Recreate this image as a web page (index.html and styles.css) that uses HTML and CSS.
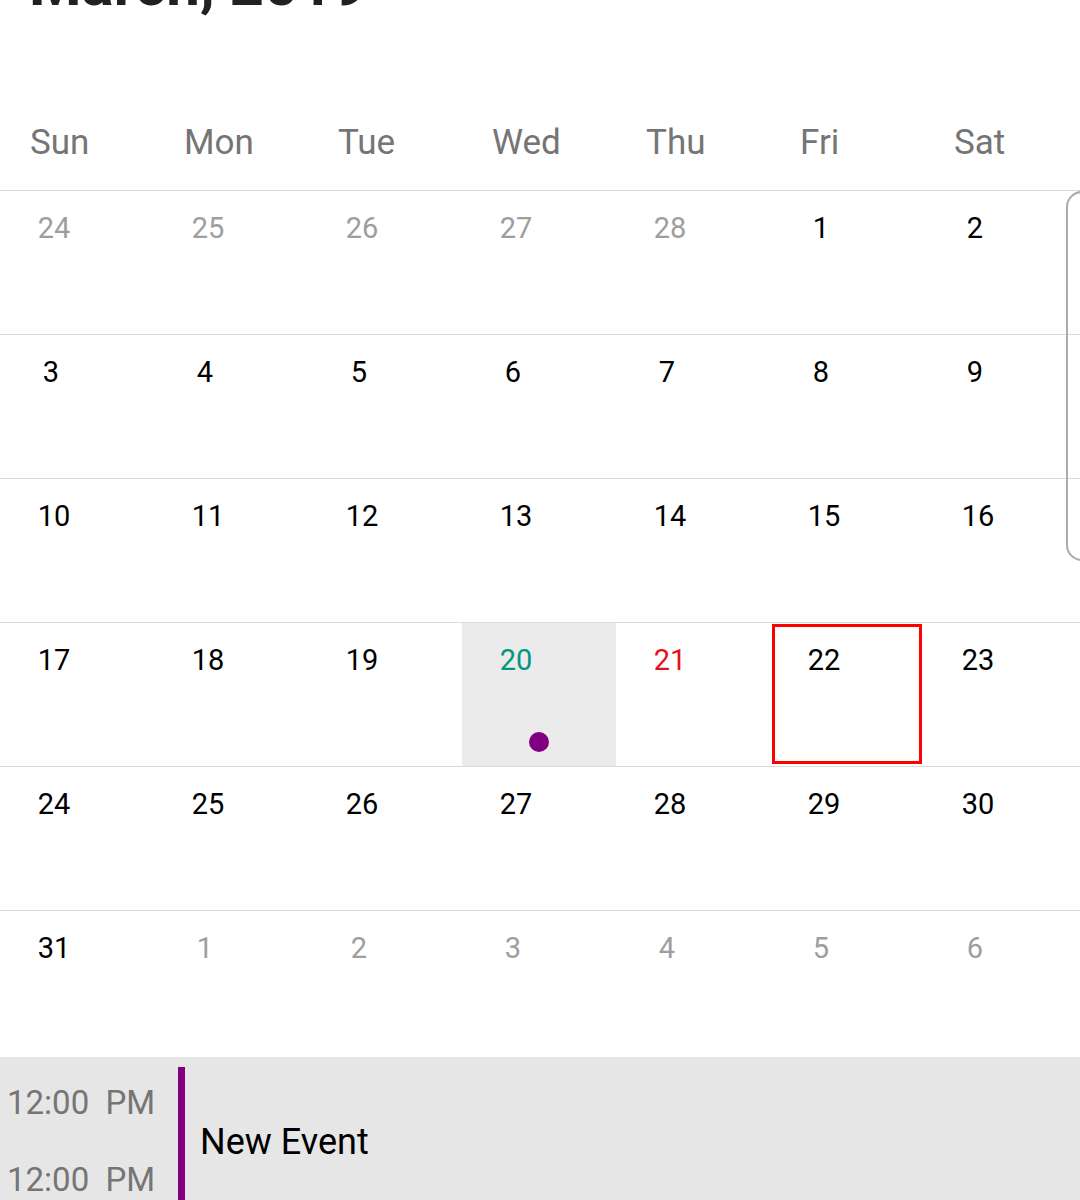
FILE: index.html
```html
<!DOCTYPE html>
<html>
<head>
<meta charset="utf-8">
<link rel="stylesheet" href="styles.css">
</head>
<body>
<div class="page">
  <div class="title">March, 2019</div>
  <div class="weekdays">
    <div class="wd">Sun</div><div class="wd">Mon</div><div class="wd">Tue</div><div class="wd">Wed</div><div class="wd">Thu</div><div class="wd">Fri</div><div class="wd">Sat</div>
  </div>
  <div class="month">
    <div class="week">
      <div class="cell"><span class="num muted">24</span></div>
      <div class="cell"><span class="num muted">25</span></div>
      <div class="cell"><span class="num muted">26</span></div>
      <div class="cell"><span class="num muted">27</span></div>
      <div class="cell"><span class="num muted">28</span></div>
      <div class="cell"><span class="num one">1</span></div>
      <div class="cell"><span class="num one">2</span></div>
    </div>
    <div class="week">
      <div class="cell"><span class="num one">3</span></div>
      <div class="cell"><span class="num one">4</span></div>
      <div class="cell"><span class="num one">5</span></div>
      <div class="cell"><span class="num one">6</span></div>
      <div class="cell"><span class="num one">7</span></div>
      <div class="cell"><span class="num one">8</span></div>
      <div class="cell"><span class="num one">9</span></div>
    </div>
    <div class="week">
      <div class="cell"><span class="num">10</span></div>
      <div class="cell"><span class="num">11</span></div>
      <div class="cell"><span class="num">12</span></div>
      <div class="cell"><span class="num">13</span></div>
      <div class="cell"><span class="num">14</span></div>
      <div class="cell"><span class="num">15</span></div>
      <div class="cell"><span class="num">16</span></div>
    </div>
    <div class="week">
      <div class="cell"><span class="num">17</span></div>
      <div class="cell"><span class="num">18</span></div>
      <div class="cell"><span class="num">19</span></div>
      <div class="cell today"><span class="num teal">20</span><span class="dot"></span></div>
      <div class="cell"><span class="num red">21</span></div>
      <div class="cell selected"><span class="num">22</span></div>
      <div class="cell"><span class="num">23</span></div>
    </div>
    <div class="week">
      <div class="cell"><span class="num">24</span></div>
      <div class="cell"><span class="num">25</span></div>
      <div class="cell"><span class="num">26</span></div>
      <div class="cell"><span class="num">27</span></div>
      <div class="cell"><span class="num">28</span></div>
      <div class="cell"><span class="num">29</span></div>
      <div class="cell"><span class="num">30</span></div>
    </div>
    <div class="week last">
      <div class="cell"><span class="num">31</span></div>
      <div class="cell"><span class="num one muted">1</span></div>
      <div class="cell"><span class="num one muted">2</span></div>
      <div class="cell"><span class="num one muted">3</span></div>
      <div class="cell"><span class="num one muted">4</span></div>
      <div class="cell"><span class="num one muted">5</span></div>
      <div class="cell"><span class="num one muted">6</span></div>
    </div>
    <div class="scroll-indicator"></div>
  </div>
  <div class="events">
    <div class="event">
      <div class="times">
        <div class="time">12:00  PM</div>
        <div class="time">12:00  PM</div>
      </div>
      <div class="bar"></div>
      <div class="event-title">New Event</div>
    </div>
  </div>
</div>
</body>
</html>
```

FILE: styles.css
```css
html, body {
  margin: 0;
  padding: 0;
  background: #ffffff;
  overflow: hidden;
}
body {
  font-family: Roboto, "Noto Sans", "Liberation Sans", sans-serif;
  width: 1080px;
  height: 1200px;
}
.page {
  position: relative;
  width: 1080px;
  height: 1200px;
  overflow: hidden;
}
.title {
  font-size: 60px;
  font-weight: 700;
  line-height: 60px;
  height: 60px;
  margin-top: -45px;
  padding-left: 29px;
  color: #212121;
  white-space: nowrap;
}
.weekdays {
  box-sizing: border-box;
  height: 176px;
  padding-top: 110px;
  display: grid;
  grid-template-columns: repeat(7, 154px);
  border-bottom: 1px solid #dadada;
}
.wd {
  font-size: 35px;
  line-height: 35px;
  color: #757575;
  padding-left: 30px;
}
.month {
  position: relative;
}
.week {
  box-sizing: border-box;
  height: 144px;
  display: grid;
  grid-template-columns: repeat(7, 154px);
  border-bottom: 1px solid #dadada;
}
.week.last {
  border-bottom: none;
  height: 145px;
}
.cell {
  display: flex;
  flex-direction: column;
  align-items: flex-start;
  padding-top: 23px;
  box-sizing: border-box;
}
.num {
  display: block;
  width: 60px;
  margin-left: 24px;
  text-align: center;
  font-size: 29px;
  line-height: 29px;
  color: #000000;
}
.num.one { margin-left: 21px; }
.num.muted { color: #9e9e9e; }
.num.teal { color: #00967f; }
.num.red { color: #e8101a; }
.cell.today {
  background: #ebebeb;
}
.dot {
  width: 20px;
  height: 20px;
  border-radius: 50%;
  background: #800080;
  margin: auto auto 14px auto;
}
.cell.selected {
  margin: 1px 2px 2px 2px;
  border: 3px solid #ff0000;
  padding-top: 19px;
}
.cell.selected .num {
  margin-left: 19px;
}
.scroll-indicator {
  position: absolute;
  left: 1066px;
  top: 0;
  width: 60px;
  height: 370px;
  box-sizing: border-box;
  border: 2px solid #ababab;
  border-radius: 16px;
}
.events {
  margin-top: 1px;
  background: #e6e6e6;
  height: 150px;
  padding-top: 10px;
  box-sizing: border-box;
}
.event {
  display: flex;
  align-items: stretch;
  height: 160px;
}
.times {
  width: 171px;
  padding-left: 7px;
  padding-top: 19px;
}
.time {
  font-size: 33px;
  line-height: 33px;
  color: #757575;
  white-space: pre;
  margin-bottom: 44px;
}
.bar {
  width: 7px;
  background: #800080;
}
.event-title {
  padding-left: 15px;
  padding-top: 57px;
  font-size: 36px;
  line-height: 36px;
  color: #000000;
}
```
